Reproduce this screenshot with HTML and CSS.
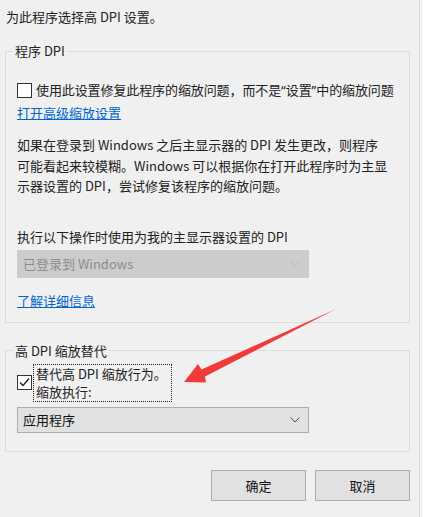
FILE: index.html
```html
<!DOCTYPE html>
<html lang="zh-CN">
<head>
<meta charset="utf-8">
<title>高 DPI 设置</title>
<link rel="stylesheet" href="styles.css">
</head>
<body>
<div class="dialog">
  <p class="intro">为此程序选择高 DPI 设置。</p>

  <fieldset class="group group-first">
    <legend>程序 DPI</legend>
    <div class="check-row">
      <span class="box"></span>
      <span class="check-text">使用此设置修复此程序的缩放问题，而不是<span class="q">“</span>设置<span class="q">”</span>中的缩放问题</span>
    </div>
    <a class="link link-first" href="#">打开高级缩放设置</a>
    <p class="desc">如果在登录到 Windows 之后主显示器的 DPI 发生更改，则程序<br>可能看起来较模糊。Windows 可以根据你在打开此程序时为主显<br>示器设置的 DPI，尝试修复该程序的缩放问题。</p>
    <p class="label">执行以下操作时使用为我的主显示器设置的 DPI</p>
    <div class="select disabled">
      <span>已登录到 Windows</span>
      <svg class="chev" width="10" height="6" viewBox="0 0 10 6"><path d="M0.5 0.5 L5 5 L9.5 0.5" fill="none" stroke="currentColor" stroke-width="1"/></svg>
    </div>
    <a class="link link-more" href="#">了解详细信息</a>
  </fieldset>

  <fieldset class="group group-second">
    <legend>高 DPI 缩放替代</legend>
    <div class="check-row override">
      <span class="box checked">
        <svg width="13" height="13" viewBox="0 0 13 13"><path d="M2 6.5 L5 9.5 L11 2.5" fill="none" stroke="#222" stroke-width="1.3"/></svg>
      </span>
      <span class="focus-label">替代高 DPI 缩放行为。<br>缩放执行:</span>
    </div>
    <div class="select">
      <span>应用程序</span>
      <svg class="chev" width="10" height="6" viewBox="0 0 10 6"><path d="M0.5 0.5 L5 5 L9.5 0.5" fill="none" stroke="currentColor" stroke-width="1"/></svg>
    </div>
  </fieldset>

  <div class="buttons">
    <button class="btn">确定</button>
    <button class="btn">取消</button>
  </div>

  <svg class="arrow" width="423" height="517" viewBox="0 0 423 517">
    <polygon points="184,382 198,364 201.5,369.5 336,309 205,376.5 206,382.5" fill="#f23a3a"/>
  </svg>
</div>
</body>
</html>
```
FILE: styles.css
```css
html, body {
  margin: 0;
  padding: 0;
}
body {
  width: 423px;
  height: 517px;
  overflow: hidden;
  background: #f6f6f6;
  font-family: "Noto Sans CJK SC", "Noto Sans", sans-serif;
  font-size: 13px;
  color: #222;
}
.dialog {
  position: relative;
  width: 420px;
  height: 517px;
  box-sizing: border-box;
  background: #f0f0f0;
  border-right: 1px solid #dcdcdc;
  padding: 8px 0 0 0;
}
.intro {
  margin: 0 0 0 6px;
  line-height: 18px;
}
.group {
  margin: 16px 0 0 5px;
  width: 405px;
  box-sizing: border-box;
  border: 1px solid #dcdcdc;
  padding: 0 11px 12px 11px;
  min-width: 0;
}
.group legend {
  margin-left: -4px;
  padding: 0 2px;
  line-height: 18px;
}
.group-second {
  margin-top: 19px;
  padding-bottom: 18px;
}
.check-row {
  display: flex;
  align-items: center;
  gap: 4px;
  margin-top: 21px;
  line-height: 18px;
  white-space: nowrap;
}
.box {
  width: 13px;
  height: 13px;
  border: 1px solid #333;
  background: #fff;
  flex: none;
  display: flex;
  align-items: center;
  justify-content: center;
}
.check-text {
  letter-spacing: -0.1px;
}
.q {
  font-family: "Noto Sans", sans-serif;
  letter-spacing: 0;
}
.link {
  display: block;
  width: max-content;
  color: #0066cc;
  text-decoration: underline;
  line-height: 18px;
}
.link-first {
  margin-top: 5px;
}
.desc {
  margin: 13px 0 0 0;
  line-height: 20.5px;
  white-space: nowrap;
}
.label {
  margin: 31px 0 0 0;
  line-height: 18px;
}
.select {
  margin-top: 4px;
  width: 292px;
  height: 28px;
  box-sizing: border-box;
  display: flex;
  align-items: center;
  justify-content: space-between;
  padding: 0 6px 0 5px;
  background: #e1e1e1;
  border: 1px solid #adadad;
  color: #111;
}
.select.disabled {
  background: #cccccc;
  border-color: #cccccc;
  color: #8c8c8c;
}
.select.disabled .chev {
  color: #b8b8b8;
}
.chev {
  color: #555;
  margin-right: 2px;
}
.link-more {
  margin-top: 14px;
}
.override {
  margin-top: 4px;
  gap: 1px;
}
.focus-label {
  border: 1px dotted #222;
  padding: 0 4px 0 2px;
  line-height: 18px;
}
.group-second .select {
  margin-top: 5px;
  height: 26px;
}
.buttons {
  display: flex;
  justify-content: flex-end;
  gap: 9px;
  width: 410px;
  margin-top: 18px;
}
.btn {
  width: 95px;
  height: 31px;
  background: #e1e1e1;
  border: 1px solid #adadad;
  font-family: inherit;
  font-size: 13px;
  color: #111;
  padding: 0;
}
.arrow {
  position: absolute;
  left: 0;
  top: 0;
  pointer-events: none;
}
```
